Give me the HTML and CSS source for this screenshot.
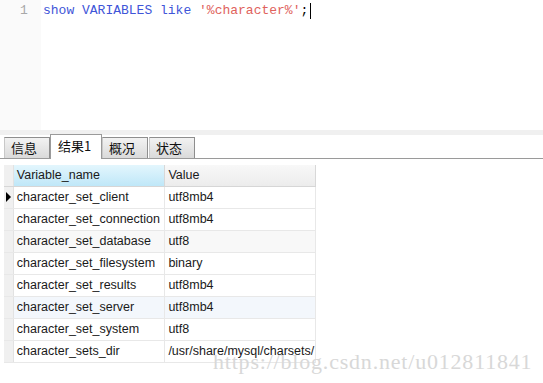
FILE: index.html
```html
<!DOCTYPE html>
<html lang="zh-CN">
<head>
  <meta charset="UTF-8">
  <title>查询</title>
  <link rel="stylesheet" href="styles.css">
</head>
<body>

  <!-- SQL editor -->
  <div class="editor">
    <div class="gutter">1</div>
    <div class="code"><span class="kw">show VARIABLES like</span> <span class="str">'%character%'</span>;<span class="caret"></span></div>
  </div>

  <div class="splitter"></div>

  <!-- Result tabs -->
  <div class="tabs">
    <div class="tab">信息</div>
    <div class="tab active">结果1</div>
    <div class="tab">概况</div>
    <div class="tab">状态</div>
  </div>

  <!-- Result grid -->
  <div class="grid">
    <div class="row head">
      <div class="mark"></div>
      <div class="cell name">Variable_name</div>
      <div class="cell value">Value</div>
    </div>
    <div class="row">
      <div class="mark current"></div>
      <div class="cell name">character_set_client</div>
      <div class="cell value">utf8mb4</div>
    </div>
    <div class="row">
      <div class="mark"></div>
      <div class="cell name">character_set_connection</div>
      <div class="cell value">utf8mb4</div>
    </div>
    <div class="row alt">
      <div class="mark"></div>
      <div class="cell name">character_set_database</div>
      <div class="cell value">utf8</div>
    </div>
    <div class="row">
      <div class="mark"></div>
      <div class="cell name">character_set_filesystem</div>
      <div class="cell value">binary</div>
    </div>
    <div class="row">
      <div class="mark"></div>
      <div class="cell name">character_set_results</div>
      <div class="cell value">utf8mb4</div>
    </div>
    <div class="row hover">
      <div class="mark"></div>
      <div class="cell name">character_set_server</div>
      <div class="cell value">utf8mb4</div>
    </div>
    <div class="row">
      <div class="mark"></div>
      <div class="cell name">character_set_system</div>
      <div class="cell value">utf8</div>
    </div>
    <div class="row">
      <div class="mark"></div>
      <div class="cell name">character_sets_dir</div>
      <div class="cell value">/usr/share/mysql/charsets/</div>
    </div>
  </div>

  <div class="watermark">https://blog.csdn.net/u012811841</div>

</body>
</html>
```

FILE: styles.css
```css
body {
  margin: 0;
  width: 543px;
  height: 383px;
  overflow: hidden;
  background: #fff;
  font-family: "Liberation Sans", "Noto Sans CJK SC", sans-serif;
  font-size: 12.5px;
  color: #1a1a1a;
  position: relative;
}

/* editor */
.editor {
  display: flex;
  height: 130px;
}

.gutter {
  width: 41px;
  background: #fafafa;
  font-family: "Liberation Mono", monospace;
  font-size: 13px;
  color: #a8a8a8;
  padding: 3px 0 0 20px;
  box-sizing: border-box;
  line-height: 16px;
}

.code {
  padding: 3px 0 0 2px;
  font-family: "Liberation Mono", monospace;
  font-size: 13px;
  line-height: 16px;
  color: #000;
  white-space: pre;
}

.kw {
  color: #4055d8;
}

.str {
  color: #e0625c;
}

.caret {
  display: inline-block;
  width: 1px;
  height: 16px;
  background: #000;
  vertical-align: top;
  margin-left: 2px;
}

.splitter {
  height: 5px;
  background: #f0f0f0;
}

/* tabs */
.tabs {
  display: flex;
  align-items: flex-end;
  height: 23px;
  padding-left: 4px;
  border-bottom: 1px solid #9a9a9a;
}

.tab {
  width: 46px;
  height: 21px;
  box-sizing: border-box;
  border: 1px solid #8e8e8e;
  border-bottom: none;
  border-left-color: #c8c8c8;
  background: linear-gradient(#f2f2f2, #dadada);
  padding-left: 6px;
  line-height: 20px;
  margin-right: 1px;
  color: #111;
  font-family: "Noto Sans CJK SC", sans-serif;
  font-size: 13px;
}

.tab.active {
  width: 52px;
  height: 25px;
  margin: 0 0 -1px -1px;
  background: #fff;
  border-color: #9a9a9a;
  padding-left: 7px;
  line-height: 22px;
}

/* grid */
.grid {
  margin: 6px 0 0 4px;
  width: 312px;
}

.row {
  display: flex;
  height: 22px;
  border-bottom: 1px solid #e8e8e8;
  box-sizing: border-box;
}

.row.alt .cell {
  background: #f8f8f8;
}

.row.hover .cell {
  background: #f3f7fc;
}

.mark {
  width: 9px;
  background: #f0f0f0;
  border-right: 1px solid #e2e2e2;
  position: relative;
}

.mark.current::after {
  content: "";
  position: absolute;
  left: 2px;
  top: 5px;
  border-left: 5px solid #000;
  border-top: 5px solid transparent;
  border-bottom: 5px solid transparent;
}

.cell {
  line-height: 21px;
  padding-left: 3px;
  overflow: hidden;
  white-space: nowrap;
  border-right: 1px solid #e8e8e8;
}

.cell.name {
  width: 151px;
}

.cell.value {
  width: 150px;
}

.head {
  border-bottom: 1px solid #d6d6d6;
}

.head .cell.name {
  background: linear-gradient(#e3f6fd, #bfe7f8);
  border-right-color: #d8d8d8;
}

.head .cell.value {
  background: linear-gradient(#f8f8f8, #ececec);
  border-right-color: #d8d8d8;
}

.watermark {
  position: absolute;
  left: 213px;
  top: 350px;
  font-family: "Liberation Serif", serif;
  font-size: 22px;
  line-height: 24px;
  color: #d8d8d8;
  letter-spacing: 0.8px;
}
```
